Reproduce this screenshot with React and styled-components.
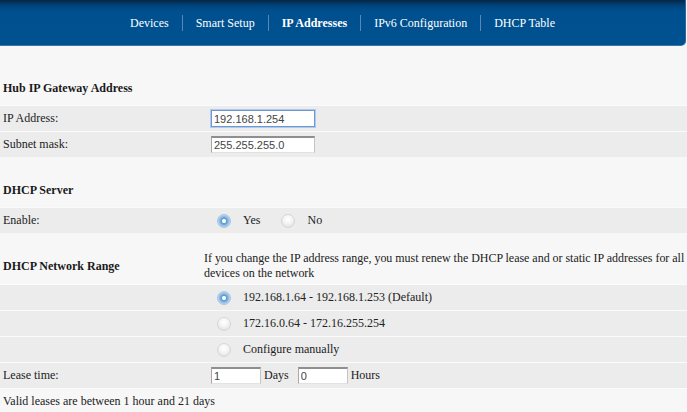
import React from 'react';
import styled, { createGlobalStyle } from 'styled-components';

const GlobalStyle = createGlobalStyle`
  html, body {
    margin: 0;
    padding: 0;
    background: #f7f7f7;
  }
  body {
    font-family: "Liberation Serif", "Times New Roman", serif;
    font-size: 12px;
    color: #1e1e1e;
  }
`;

const Header = styled.header`
  height: 45px;
  margin-right: 1px;
  background: linear-gradient(to bottom, #052645 0px, #00467f 6px, #00508f 12px, #00518f 100%);
  border-bottom: 1px solid #3a76ae;
  border-right: 1px solid #2c67a0;
  border-bottom-right-radius: 5px;
  display: flex;
  align-items: center;
  justify-content: center;
`;

const NavItem = styled.a`
  padding: 0 13px;
  line-height: 16px;
  color: #ffffff;
  font-weight: ${p => (p.$active ? 'bold' : 'normal')};
  text-decoration: none;
  & + & {
    border-left: 1px solid #5b86b3;
  }
`;

const Main = styled.main`
  display: flex;
  flex-direction: column;
`;

const SectionTitle = styled.div`
  height: 30px;
  line-height: 30px;
  padding-left: 3px;
  margin-top: ${p => p.$top}px;
  margin-bottom: 2px;
  font-weight: bold;
  color: #1a1a1a;
`;

const Row = styled.div`
  display: grid;
  grid-template-columns: 204px 1fr;
  align-items: center;
  height: 25px;
  border-top: 1px solid #fbfbfb;
  background: ${p => (p.$plain ? 'transparent' : '#ececec')};
`;

const Label = styled.div`
  padding-left: 3px;
  color: #222;
  white-space: nowrap;
  grid-column: ${p => (p.$span ? '1 / -1' : 'auto')};
`;

const Field = styled.div`
  display: flex;
  align-items: center;
  padding-left: ${p => p.$indent}px;
  color: #222;
`;

const RangeHead = styled.div`
  display: grid;
  grid-template-columns: 204px 1fr;
  align-items: center;
  height: 36px;
  margin-top: 15px;
`;

const RangeTitle = styled.div`
  padding-left: 3px;
  font-weight: bold;
  color: #1a1a1a;
`;

const Note = styled.p`
  margin: 0;
  line-height: 15px;
  letter-spacing: -0.03px;
  color: #222;
`;

const TextInput = styled.input`
  box-sizing: border-box;
  width: ${p => p.$w}px;
  height: 17px;
  margin: 0;
  padding: 0 2px;
  background: #fff;
  font-family: "Liberation Sans", Arial, sans-serif;
  font-size: 11px;
  color: #444;
  border-style: solid;
  border-width: 2px 1px 1px 1px;
  border-color: #8f8f8f #c4c4c4 #e2e2e2 #a8a8a8;
  outline: none;
  ${p =>
    p.$focused &&
    `
    border-width: 1px;
    border-color: #6f98cf;
    box-shadow: 0 0 0 1px #aecbef;
  `}
`;

const Unit = styled.span`
  margin: 0 ${p => p.$after}px 0 3px;
`;

const Radio = styled.span`
  box-sizing: border-box;
  display: inline-block;
  width: 14px;
  height: 14px;
  border-radius: 50%;
  flex: none;
  margin-left: ${p => p.$gap || 0}px;
  border: 1px solid ${p => (p.$checked ? '#a6c6e4' : '#d6d6d6')};
  background: ${p =>
    p.$checked
      ? 'radial-gradient(circle, #ffffff 0 1.5px, #5e9bd2 2.5px, #7fb2df 4px, #b9d6ef 6px)'
      : 'radial-gradient(circle at 50% 35%, #ffffff 0, #f4f4f4 45%, #d8d8d8 100%)'};
`;

const OptionText = styled.span`
  margin-left: 12px;
  color: #222;
`;

export default function App() {
  const tabs = ['Devices', 'Smart Setup', 'IP Addresses', 'IPv6 Configuration', 'DHCP Table'];
  return (
    <>
      <GlobalStyle />
      <Header>
        {tabs.map(t => (
          <NavItem key={t} $active={t === 'IP Addresses'}>{t}</NavItem>
        ))}
      </Header>
      <Main>
        <SectionTitle $top={27}>Hub IP Gateway Address</SectionTitle>
        <Row>
          <Label>IP Address:</Label>
          <Field $indent={7}>
            <TextInput $w={104} $focused defaultValue="192.168.1.254" />
          </Field>
        </Row>
        <Row>
          <Label>Subnet mask:</Label>
          <Field $indent={7}>
            <TextInput $w={104} defaultValue="255.255.255.0" />
          </Field>
        </Row>

        <SectionTitle $top={18}>DHCP Server</SectionTitle>
        <Row>
          <Label>Enable:</Label>
          <Field $indent={13}>
            <Radio $checked />
            <OptionText>Yes</OptionText>
            <Radio $gap={21} />
            <OptionText>No</OptionText>
          </Field>
        </Row>

        <RangeHead>
          <RangeTitle>DHCP Network Range</RangeTitle>
          <Note>
            If you change the IP address range, you must renew the DHCP lease and or static IP addresses for all
            devices on the network
          </Note>
        </RangeHead>
        <Row>
          <Label />
          <Field $indent={13}>
            <Radio $checked />
            <OptionText>192.168.1.64 - 192.168.1.253 (Default)</OptionText>
          </Field>
        </Row>
        <Row>
          <Label />
          <Field $indent={13}>
            <Radio />
            <OptionText>172.16.0.64 - 172.16.255.254</OptionText>
          </Field>
        </Row>
        <Row>
          <Label />
          <Field $indent={13}>
            <Radio />
            <OptionText>Configure manually</OptionText>
          </Field>
        </Row>
        <Row>
          <Label>Lease time:</Label>
          <Field $indent={7}>
            <TextInput $w={50} defaultValue="1" />
            <Unit $after={9}>Days</Unit>
            <TextInput $w={50} defaultValue="0" />
            <Unit $after={0}>Hours</Unit>
          </Field>
        </Row>
        <Row $plain>
          <Label $span>Valid leases are between 1 hour and 21 days</Label>
        </Row>
      </Main>
    </>
  );
}
